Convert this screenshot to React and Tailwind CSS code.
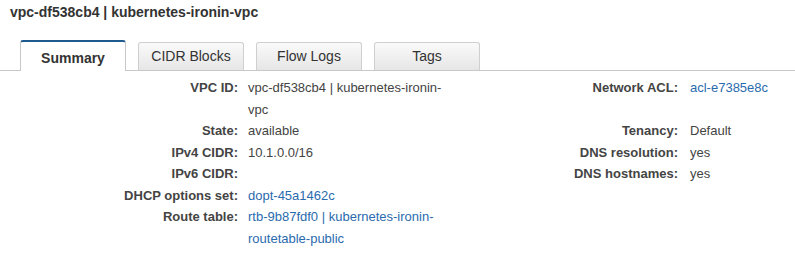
const rows = [
  {
    label: "VPC ID:",
    value: "vpc-df538cb4 | kubernetes-ironin-vpc",
    label2: "Network ACL:",
    value2: "acl-e7385e8c",
    link2: true,
  },
  { label: "State:", value: "available", label2: "Tenancy:", value2: "Default" },
  { label: "IPv4 CIDR:", value: "10.1.0.0/16", label2: "DNS resolution:", value2: "yes" },
  { label: "IPv6 CIDR:", value: "", label2: "DNS hostnames:", value2: "yes" },
  { label: "DHCP options set:", value: "dopt-45a1462c", link: true },
  {
    label: "Route table:",
    value: "rtb-9b87fdf0 | kubernetes-ironin-routetable-public",
    link: true,
  },
];

const tabs = ["Summary", "CIDR Blocks", "Flow Logs", "Tags"];

const App = () => {
  return (
    <div
      className="w-[795px] h-[257px] bg-white text-[#444] overflow-hidden"
      style={{ fontFamily: '"Liberation Sans", Arial, sans-serif' }}
    >
      <h1 className="pl-[10px] pt-[3px] text-[14px] leading-[18px] font-bold text-[#333]">
        vpc-df538cb4 | kubernetes-ironin-vpc
      </h1>

      {/* Pestañas */}
      <div className="mt-[19px] flex items-end h-[31px] border-b border-[#c8c8c8] pl-[20px] gap-[12px]">
        {tabs.map((tab, i) =>
          i === 0 ? (
            <div
              key={tab}
              className="w-[106px] h-[31px] -mb-px bg-white border-x border-[#c8c8c8] border-t-2 border-t-[#1f5a8f] rounded-t-[3px] flex items-center justify-center pt-[3px] text-[14px] font-bold text-[#333]"
            >
              {tab}
            </div>
          ) : (
            <div
              key={tab}
              className="w-[106px] h-[28px] bg-gradient-to-b from-[#fafafa] to-[#e6e6e6] border-x border-t border-[#cfcfcf] rounded-t-[3px] flex items-center justify-center text-[14px] text-[#333]"
            >
              {tab}
            </div>
          )
        )}
      </div>

      {/* Detalles */}
      <div className="mt-[6px] grid grid-cols-[248px_210px_232px_1fr] text-[13px] leading-[21.5px]">
        {rows.map((r) => (
          <div key={r.label} className="contents">
            <div className="text-right pr-[10px] font-bold text-[#444]">{r.label}</div>
            <div className={r.link ? "text-[#2a6bae]" : "text-[#444]"}>{r.value}</div>
            <div className="text-right pr-[12px] font-bold text-[#444]">{r.label2 || ""}</div>
            <div className={r.link2 ? "text-[#2a6bae]" : "text-[#444]"}>{r.value2 || ""}</div>
          </div>
        ))}
      </div>
    </div>
  );
};

export default App;
